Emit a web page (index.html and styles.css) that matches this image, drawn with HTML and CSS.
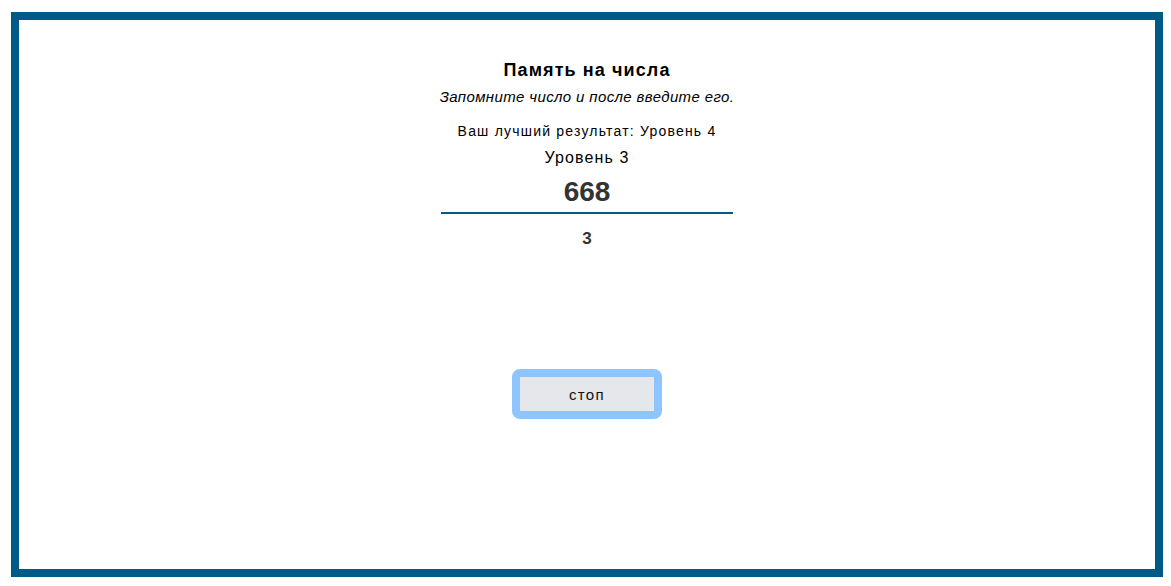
FILE: index.html
```html
<!DOCTYPE html>
<html lang="ru">
<head>
<meta charset="utf-8">
<title>Память на числа</title>
<link rel="stylesheet" href="styles.css">
</head>
<body>
<main class="frame">
  <section class="game">
    <h1 class="title">Память на числа</h1>
    <p class="subtitle">Запомните число и после введите его.</p>
    <p class="best">Ваш лучший результат: Уровень 4</p>
    <p class="level">Уровень 3</p>
    <input class="answer" type="text" value="668" readonly>
    <div class="timer">3</div>
    <button class="stop" type="button">стоп</button>
  </section>
</main>
</body>
</html>
```
FILE: styles.css
```css
html, body {
  background: #ffffff;
}
body {
  margin: 12px 8px 9px 11px;
  font-family: "Liberation Sans", Arial, sans-serif;
  color: #000;
}
.frame {
  display: block;
  box-sizing: border-box;
  height: 565px;
  border: 8px solid #005a87;
}
.game {
  display: flex;
  flex-direction: column;
  align-items: center;
  padding-top: 40px;
}
.title {
  margin: 0;
  font-size: 18px;
  line-height: 21px;
  font-weight: bold;
  letter-spacing: 1.1px;
}
.subtitle {
  margin: 7px 0 0;
  font-size: 15px;
  line-height: 18px;
  font-style: italic;
  letter-spacing: 0.37px;
}
.best {
  margin: 17px 0 0;
  font-size: 14px;
  line-height: 16px;
  letter-spacing: 1.2px;
}
.level {
  margin: 10px 0 0;
  font-size: 16px;
  line-height: 18px;
  letter-spacing: 1.1px;
}
.answer {
  margin: 9px 0 0;
  box-sizing: border-box;
  width: 292px;
  height: 38px;
  padding: 0 0 4px;
  border: none;
  border-bottom: 2px solid #005a87;
  outline: none;
  background: transparent;
  text-align: center;
  font-family: "Liberation Sans", Arial, sans-serif;
  font-size: 28px;
  line-height: 32px;
  font-weight: bold;
  color: #333333;
}
.timer {
  margin-top: 15px;
  font-size: 17px;
  line-height: 20px;
  font-weight: bold;
  color: #333333;
}
.stop {
  margin-top: 120px;
  box-sizing: border-box;
  width: 150px;
  height: 50px;
  padding: 0;
  border: 8px solid #8ec5ff;
  border-radius: 8px;
  background: #e5e7eb;
  background-clip: padding-box;
  font-family: "Liberation Sans", Arial, sans-serif;
  font-size: 15px;
  letter-spacing: 1.3px;
  color: #111;
  cursor: pointer;
}
```
